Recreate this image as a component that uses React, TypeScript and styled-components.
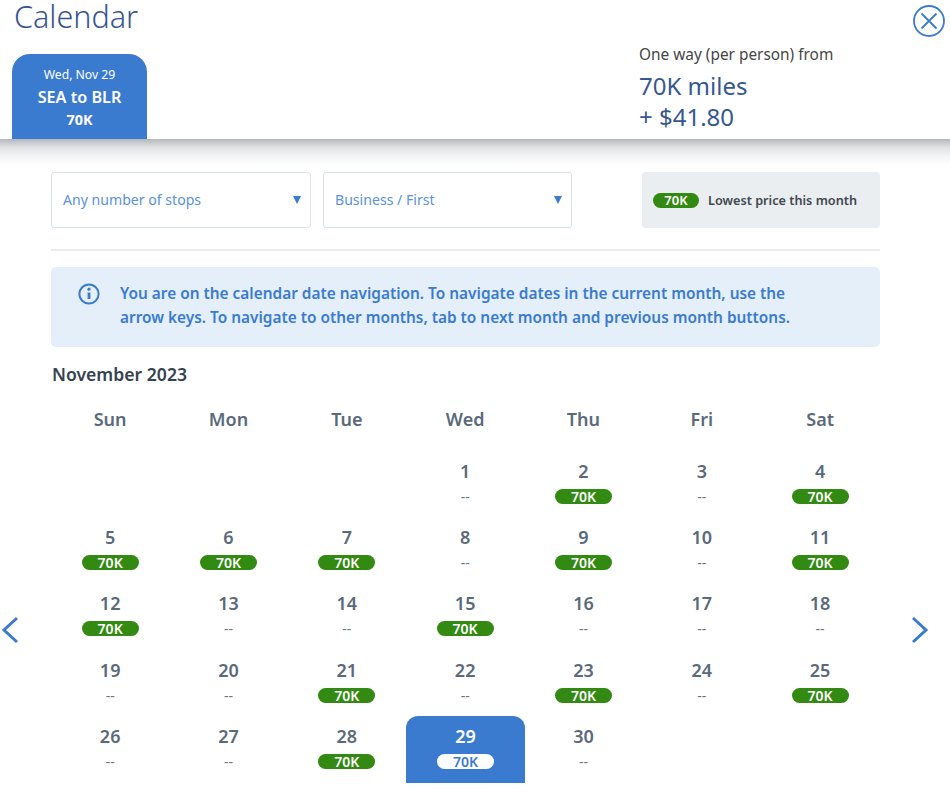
import React from "react";
import styled, { createGlobalStyle } from "styled-components";

const Global = createGlobalStyle`
  html, body { margin: 0; padding: 0; background: #fff; }
  body { font-family: "Noto Sans", "Open Sans", "Liberation Sans", sans-serif; }
`;

const Page = styled.div`
  position: relative;
  width: 950px;
  height: 809px;
  overflow: hidden;
  background: #fff;
`;

const Header = styled.header`
  height: 139px;
  display: flex;
  justify-content: space-between;
  padding-left: 12px;
  box-sizing: border-box;
`;

const HeaderLeft = styled.div`
  display: flex;
  flex-direction: column;
  justify-content: space-between;
`;

const Title = styled.h1`
  margin: 0 0 0 2px;
  font-size: 30.5px;
  line-height: 33px;
  font-weight: 300;
  color: #36558f;
`;

const Tab = styled.div`
  width: 135px;
  height: 85px;
  background: #3a7bd0;
  border-radius: 18px 18px 0 0;
  color: #fff;
  text-align: center;
  box-sizing: border-box;
  padding-top: 12px;
`;

const TabDate = styled.div`
  font-size: 12.2px;
  line-height: 17px;
`;

const TabRoute = styled.div`
  font-size: 16.2px;
  line-height: 28px;
  font-weight: 600;
`;

const TabPrice = styled.div`
  font-size: 14.4px;
  line-height: 18px;
  font-weight: 700;
`;

const Fare = styled.div`
  width: 311px;
  padding-top: 45px;
  box-sizing: border-box;
`;

const FareLabel = styled.div`
  font-size: 15.4px;
  line-height: 20px;
  color: #454545;
`;

const FareValue = styled.div`
  font-size: 24px;
  line-height: 31px;
  color: #36588f;
`;

const FareValues = styled.div`
  margin-top: 5px;
`;

const CloseButton = styled.button`
  position: absolute;
  top: 5px;
  right: 5px;
  width: 32px;
  height: 32px;
  padding: 0;
  border: 0;
  background: none;
  color: #3a7bd0;
`;

const Shade = styled.div`
  height: 27px;
  background: linear-gradient(#b3b8bc 0, #dfe1e3 8px, #f4f5f6 18px, #fff 27px);
`;

const Main = styled.main`
  margin: 6px 70px 0 51px;
`;

const Filters = styled.div`
  display: flex;
  height: 56px;
`;

const Select = styled.div<{ $w: number; $mr: number }>`
  width: ${(p) => p.$w}px;
  margin-right: ${(p) => p.$mr}px;
  box-sizing: border-box;
  border: 1px solid #dbe3ec;
  border-radius: 3px;
  display: flex;
  align-items: center;
  justify-content: space-between;
  padding: 0 9px 2px 11px;
  font-size: 14.1px;
  color: #5a91dc;
`;

const Caret = styled.span`
  width: 0;
  height: 0;
  margin-top: 2px;
  border-left: 4.5px solid transparent;
  border-right: 4.5px solid transparent;
  border-top: 8px solid #3a7bd0;
`;

const Legend = styled.div`
  width: 238px;
  background: #ebeef0;
  border-radius: 3px;
  display: flex;
  align-items: center;
  gap: 9px;
  padding-left: 11px;
  box-sizing: border-box;
  font-size: 12.7px;
  font-weight: 600;
  color: #3f4750;
`;

const Divider = styled.hr`
  margin: 21px 0 16px;
  border: 0;
  height: 2px;
  background: #e9edf1;
`;

const Info = styled.div`
  height: 80px;
  box-sizing: border-box;
  background: #e4eff9;
  border-radius: 5px;
  display: flex;
  align-items: flex-start;
  padding: 15px 60px 0 27px;
  gap: 20px;
  color: #3a7bd0;
  font-size: 15.4px;
  line-height: 24px;
  font-weight: 600;
`;

const InfoIcon = styled.svg`
  flex: none;
  margin-top: 1px;
`;

const Month = styled.h2`
  margin: 15px 0 0 1px;
  font-size: 17.6px;
  line-height: 25px;
  font-weight: 600;
  color: #36424f;
`;

const Grid = styled.div`
  display: grid;
  grid-template-columns: repeat(7, 118.33px);
  grid-auto-rows: 66.25px;
  text-align: center;
`;

const WeekRow = styled(Grid)`
  grid-auto-rows: 32px;
  margin-top: 19px;
  margin-bottom: 12.85px;
`;

const Weekday = styled.div`
  font-size: 18px;
  line-height: 26px;
  font-weight: 600;
  color: #5a6a7a;
`;

const Cell = styled.div<{ $selected?: boolean }>`
  padding-top: 8px;
  box-sizing: border-box;
  background: ${(p) => (p.$selected ? "#3a7bd0" : "transparent")};
  border-radius: ${(p) => (p.$selected ? "12px 12px 0 0" : "0")};
  margin-right: ${(p) => (p.$selected ? "-0.7px" : "0")};
  margin-bottom: ${(p) => (p.$selected ? "-0.75px" : "0")};
`;

const DayNumber = styled.div<{ $selected?: boolean }>`
  font-size: 18px;
  line-height: 24px;
  font-weight: 600;
  color: ${(p) => (p.$selected ? "#fff" : "#5a6a7a")};
`;

const Empty = styled.div`
  font-size: 14px;
  line-height: 28px;
  color: #6a7886;
`;

const Badge = styled.span<{ $selected?: boolean; $small?: boolean }>`
  display: ${(p) => (p.$small ? "inline-flex" : "flex")};
  flex: none;
  align-items: center;
  justify-content: center;
  width: ${(p) => (p.$small ? "46px" : "57px")};
  height: 15px;
  margin: ${(p) => (p.$small ? "0" : "6px auto 0")};
  border-radius: 8px;
  font-size: ${(p) => (p.$small ? "13px" : "14px")};
  font-weight: 600;
  background: ${(p) => (p.$selected ? "#fff" : "#338a12")};
  color: ${(p) => (p.$selected ? "#3a7bd0" : "#fff")};
`;

const Arrow = styled.svg<{ $side: "left" | "right" }>`
  position: absolute;
  top: 616px;
  ${(p) => (p.$side === "left" ? "left: 0;" : "right: 20px;")}
  color: #3a7bd0;
`;

const days: (null | { d: number; fare: boolean })[] = [
  null, null, null,
  ...[1, 2, 3, 4, 5, 6, 7, 8, 9, 10, 11, 12, 13, 14, 15, 16, 17, 18, 19, 20, 21, 22, 23, 24, 25, 26, 27, 28, 29, 30].map((d) => ({
    d,
    fare: [2, 4, 5, 6, 7, 9, 11, 12, 15, 21, 23, 25, 28, 29].includes(d),
  })),
];

const weekdays = ["Sun", "Mon", "Tue", "Wed", "Thu", "Fri", "Sat"];

export default function App() {
  return (
    <Page>
      <Global />
      <Header>
        <HeaderLeft>
          <Title>Calendar</Title>
          <Tab>
            <TabDate>Wed, Nov 29</TabDate>
            <TabRoute>SEA to BLR</TabRoute>
            <TabPrice>70K</TabPrice>
          </Tab>
        </HeaderLeft>
        <Fare>
          <FareLabel>One way (per person) from</FareLabel>
          <FareValues>
            <FareValue>70K miles</FareValue>
            <FareValue>+ $41.80</FareValue>
          </FareValues>
        </Fare>
      </Header>
      <CloseButton aria-label="Close">
        <svg width="32" height="32" viewBox="0 0 32 32" fill="none" stroke="currentColor" strokeWidth="1.8">
          <circle cx="16" cy="16" r="15" />
          <path d="M8.5 8.5l15 15M23.5 8.5l-15 15" />
        </svg>
      </CloseButton>
      <Shade />
      <Main>
        <Filters>
          <Select $w={260} $mr={12}>
            Any number of stops
            <Caret />
          </Select>
          <Select $w={249} $mr={70}>
            Business / First
            <Caret />
          </Select>
          <Legend>
            <Badge $small>70K</Badge>
            Lowest price this month
          </Legend>
        </Filters>
        <Divider />
        <Info>
          <InfoIcon width="22" height="22" viewBox="0 0 22 22" fill="none" stroke="currentColor" strokeWidth="2">
            <circle cx="11" cy="11" r="9.6" />
            <path d="M11 9.5v6.5" strokeWidth="2.8" />
            <circle cx="11" cy="6.2" r="1.6" fill="currentColor" stroke="none" />
          </InfoIcon>
          <div>
            You are on the calendar date navigation. To navigate dates in the current month, use the arrow keys. To navigate to other months, tab to next month and previous month buttons.
          </div>
        </Info>
        <Month>November 2023</Month>
        <WeekRow>
          {weekdays.map((w) => (
            <Weekday key={w}>{w}</Weekday>
          ))}
        </WeekRow>
        <Grid>
          {days.map((c, i) => {
            if (!c) return <Cell key={i} />;
            const selected = c.d === 29;
            return (
              <Cell key={i} $selected={selected}>
                <DayNumber $selected={selected}>{c.d}</DayNumber>
                {c.fare ? <Badge $selected={selected}>70K</Badge> : <Empty>--</Empty>}
              </Cell>
            );
          })}
        </Grid>
      </Main>
      <Arrow $side="left" width="20" height="28" viewBox="0 0 20 28" fill="none" stroke="currentColor" strokeWidth="3">
        <path d="M17 2L4 14l13 12" />
      </Arrow>
      <Arrow $side="right" width="20" height="28" viewBox="0 0 20 28" fill="none" stroke="currentColor" strokeWidth="3">
        <path d="M3 2l13 12L3 26" />
      </Arrow>
    </Page>
  );
}
